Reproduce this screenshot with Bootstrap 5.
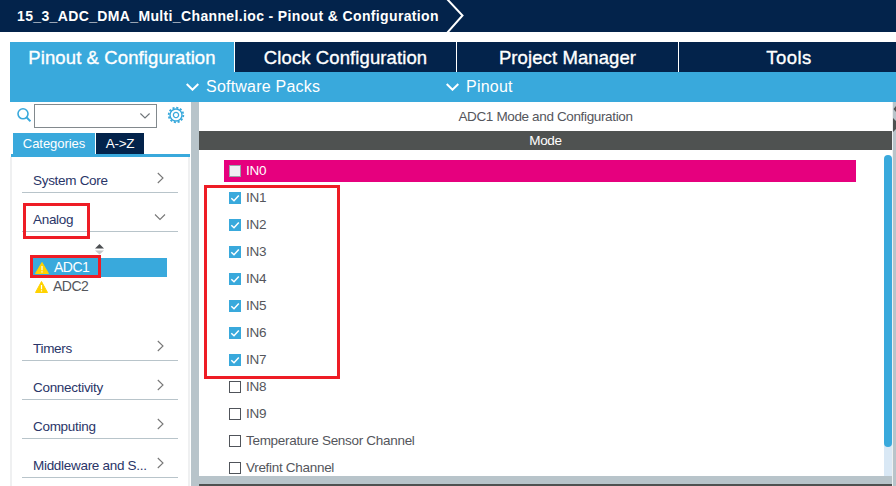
<!DOCTYPE html>
<html lang="en">
<head>
<meta charset="utf-8">
<meta name="viewport" content="width=device-width, initial-scale=1">
<title>Pinout &amp; Configuration</title>
<link href="https://cdn.jsdelivr.net/npm/bootstrap@5.3.0/dist/css/bootstrap.min.css" rel="stylesheet">
<style>
:root{--navy:#03234b;--sky:#39a9dc;--steel:#b8c4ca;--coal:#4f5251;--alert:#ee1c25}
body{width:896px;height:486px;overflow:hidden;background:#fff;font:13.5px/16px "Liberation Sans",Arial,sans-serif;letter-spacing:-.3px;color:#54565c}
svg{display:block;flex:none}
.crumb{height:32px;background:var(--navy);padding-left:17px}
.crumb-text{font-size:14px;font-weight:700;letter-spacing:.36px;width:423px}
.main-tabs{height:30px;margin:10px 0 0 10px;gap:1px}
.main-tabs .nav-link{width:221px;padding:0;background:var(--navy);color:#fff;border-radius:0;font-size:18.5px;letter-spacing:.1px;line-height:31px;text-align:center;-webkit-text-stroke:.35px #fff}
.main-tabs .nav-link.active{width:224px;background:var(--sky)}
.main-tabs .nav-link:last-child{width:217px;padding-left:3px;letter-spacing:.5px}
.sub-bar{height:30px;margin-left:10px;background:var(--sky);color:#fff;font-size:16px;letter-spacing:.22px}
.menu-a{margin-left:176px;width:260px;gap:7px}
.menu-b{gap:7px}
.work{height:384px;padding-left:10px}
.side{width:180px;flex:none}
.search-row{height:31px;padding:2px 0 0 7px}
.combo{width:123px;height:24px;border:1px solid #82898d;margin-left:3px;padding-right:6px}
.side-tabs{padding-left:3px;gap:1px;height:21px;color:#fff}
.side-tabs div{height:21px;line-height:21px;text-align:center}
.tab-cat{width:82px;background:var(--sky);font-size:13px;letter-spacing:-.05px}
.tab-az{width:48px;background:var(--navy)}
.side-body{height:332px;border-left:2px solid #eff0f1;border-right:2px solid #eff0f1;overflow:hidden;padding:0 10px}
.side-line{height:3px;background:var(--sky);margin-left:1px}
.group-row{height:39px;border-bottom:1px solid var(--steel);padding:14px 14px 0 11px;color:#2a3568}
.group-row.opened{padding-right:12px}
.group-row.first{height:36px;padding-top:11px}
.group-row .label{line-height:26px;height:26px}
.group-row.first .label{height:25px}
.group-row svg{margin-top:4px}
.open-list{height:90px;position:relative;padding:26px 1px 0 8px;margin-right:10px}
.periph{height:19px;padding-left:5px;gap:5px;font-size:14px;letter-spacing:-.5px}
.periph span{padding-bottom:1px}
.periph.on{background:var(--sky);color:#fff}
.sorter{position:absolute;left:73px;top:12px}
.splitter{width:8px;background:var(--steel);margin-left:1px;flex:none}
.pane{width:693px;flex:none}
.pane-title{height:29px;line-height:29px;text-align:center;letter-spacing:-.36px}
.mode-bar{height:19px;line-height:19px;background:var(--coal);color:#fff;text-align:center}
.pane-main{height:326px}
.checks{width:632px;margin:7px 0 0 25px}
.check-row{height:27px;padding-left:5px;gap:5px}
.check-row.hot{height:22px;margin:3px 0 2px;background:#e6007e;color:#fff}
.box{width:12px;height:12px;border:1px solid #50545a;background:#fff;flex:none}
.box.on{border:0;background:var(--sky)}
.check-row:not(.hot) .box{margin-top:1px}
.hot .box{background:#f0f0f3;border-color:#9aa3a8}
.track{width:8px;margin-top:5px;background:linear-gradient(#fff 50%,#d9e8f5 50%)}
.thumb{height:292px;background:var(--sky);border-radius:4px}
.pane-foot{height:8px;background:var(--steel)}
.next-bar{height:2px;background:var(--coal)}
.edge{width:4px;border-left:1px solid #eef0f1;background:var(--steel);flex:none}
.mark-frame{position:absolute;border:3px solid var(--alert);pointer-events:none}
.frame-analog{left:23px;top:203px;width:67px;height:36px}
.frame-adc{left:30px;top:255px;width:71px;height:23px}
.frame-inputs{left:204px;top:185px;width:136px;height:194px}
</style>
<script src="https://cdn.jsdelivr.net/npm/bootstrap@5.3.0/dist/js/bootstrap.bundle.min.js"></script>
</head>
<body class="position-relative">
<header class="crumb d-flex align-items-center text-white">
  <div class="crumb-text text-nowrap">15_3_ADC_DMA_Multi_Channel.ioc - Pinout &amp; Configuration</div>
  <svg width="26" height="32" fill="none" stroke="#fff" stroke-width="2"><path d="M7 -1L22.5 15.5L7 33"/></svg>
</header>
<nav class="main-tabs nav flex-nowrap">
  <a class="nav-link active">Pinout &amp; Configuration</a>
  <a class="nav-link">Clock Configuration</a>
  <a class="nav-link">Project Manager</a>
  <a class="nav-link">Tools</a>
</nav>
<div class="sub-bar d-flex align-items-center">
  <div class="menu-a d-flex align-items-center"><svg width="13" height="8" fill="none" stroke="#fff" stroke-width="2"><path d="M.7 1L6.5 6.7L12.3 1"/></svg><span>Software Packs</span></div>
  <div class="menu-b d-flex align-items-center"><svg width="13" height="8" fill="none" stroke="#fff" stroke-width="2"><path d="M.7 1L6.5 6.7L12.3 1"/></svg><span>Pinout</span></div>
</div>
<main class="work d-flex">
  <aside class="side">
    <div class="search-row d-flex align-items-start">
      <svg width="14" height="22" fill="none" stroke="#39a9dc" stroke-width="1.6"><circle cx="6" cy="9.8" r="5"/><path d="M9.7 13.5L13.5 17.3" stroke-width="2"/></svg>
      <div class="combo d-flex align-items-center justify-content-end"><svg width="10" height="6" fill="none" stroke="#6e7478" stroke-width="1.1"><path d="M.4 .5L5 5L9.6 .5"/></svg></div>
      <svg class="ms-auto me-1" width="19" height="22" viewBox="-9 -11 19 22" fill="none" stroke="#39a9dc"><circle r="6" stroke-width="1.4"/><circle r="7.3" stroke-width="1.8" stroke-dasharray="2.1 1.722"/><circle r="2.6" stroke-width="1.3"/></svg>
    </div>
    <div class="side-tabs d-flex"><div class="tab-cat">Categories</div><div class="tab-az">A-&gt;Z</div></div>
    <div class="side-line"></div>
    <div class="side-body">
      <div class="group-row first d-flex justify-content-between"><span class="label">System Core</span><svg width="7" height="12" fill="none" stroke="#777" stroke-width="1.1"><path d="M.8 1L6 6L.8 11"/></svg></div>
      <div class="group-row opened d-flex justify-content-between"><span class="label">Analog</span><svg width="12" height="12" fill="none" stroke="#777" stroke-width="1.1"><path d="M1 3.5L6 8.5L11 3.5"/></svg></div>
      <div class="open-list">
        <svg class="sorter" width="9" height="11"><path d="M0 4.5L4.5 0L9 4.5Z" fill="#4c4f52"/><path d="M0 6.5H9L4.5 10.5Z" fill="#c4c6c8"/></svg>
        <div class="periph on d-flex align-items-center"><svg width="14" height="12"><path d="M7 .5L13.5 11.5H.5Z" fill="#ffd200" stroke="#ffd200" stroke-linejoin="round"/><path d="M7 4V8.2M7 9.3V10.6" stroke="#fff" stroke-width="1.2"/></svg><span>ADC1</span></div>
        <div class="periph d-flex align-items-center"><svg width="13" height="12"><path d="M6.5 .5L12.5 11.5H.5Z" fill="#ffd200" stroke="#ffd200" stroke-linejoin="round"/><path d="M6.5 4V8.2M6.5 9.3V10.6" stroke="#fff" stroke-width="1.2"/></svg><span>ADC2</span></div>
      </div>
      <div class="group-row d-flex justify-content-between"><span class="label">Timers</span><svg width="7" height="12" fill="none" stroke="#777" stroke-width="1.1"><path d="M.8 1L6 6L.8 11"/></svg></div>
      <div class="group-row d-flex justify-content-between"><span class="label">Connectivity</span><svg width="7" height="12" fill="none" stroke="#777" stroke-width="1.1"><path d="M.8 1L6 6L.8 11"/></svg></div>
      <div class="group-row d-flex justify-content-between"><span class="label">Computing</span><svg width="7" height="12" fill="none" stroke="#777" stroke-width="1.1"><path d="M.8 1L6 6L.8 11"/></svg></div>
      <div class="group-row d-flex justify-content-between"><span class="label text-nowrap">Middleware and S...</span><svg width="7" height="12" fill="none" stroke="#777" stroke-width="1.1"><path d="M.8 1L6 6L.8 11"/></svg></div>
    </div>
  </aside>
  <div class="splitter"></div>
  <section class="pane">
    <div class="pane-title">ADC1 Mode and Configuration</div>
    <div class="mode-bar">Mode</div>
    <div class="pane-main d-flex justify-content-between">
      <div class="checks">
        <div class="check-row hot d-flex align-items-center"><span class="box"></span><span>IN0</span></div>
        <div class="check-row d-flex align-items-center"><span class="box on"><svg width="12" height="12" fill="none" stroke="#fff" stroke-width="1.5"><path d="M2.3 6.3L5 8.8L9.8 3.5"/></svg></span><span>IN1</span></div>
        <div class="check-row d-flex align-items-center"><span class="box on"><svg width="12" height="12" fill="none" stroke="#fff" stroke-width="1.5"><path d="M2.3 6.3L5 8.8L9.8 3.5"/></svg></span><span>IN2</span></div>
        <div class="check-row d-flex align-items-center"><span class="box on"><svg width="12" height="12" fill="none" stroke="#fff" stroke-width="1.5"><path d="M2.3 6.3L5 8.8L9.8 3.5"/></svg></span><span>IN3</span></div>
        <div class="check-row d-flex align-items-center"><span class="box on"><svg width="12" height="12" fill="none" stroke="#fff" stroke-width="1.5"><path d="M2.3 6.3L5 8.8L9.8 3.5"/></svg></span><span>IN4</span></div>
        <div class="check-row d-flex align-items-center"><span class="box on"><svg width="12" height="12" fill="none" stroke="#fff" stroke-width="1.5"><path d="M2.3 6.3L5 8.8L9.8 3.5"/></svg></span><span>IN5</span></div>
        <div class="check-row d-flex align-items-center"><span class="box on"><svg width="12" height="12" fill="none" stroke="#fff" stroke-width="1.5"><path d="M2.3 6.3L5 8.8L9.8 3.5"/></svg></span><span>IN6</span></div>
        <div class="check-row d-flex align-items-center"><span class="box on"><svg width="12" height="12" fill="none" stroke="#fff" stroke-width="1.5"><path d="M2.3 6.3L5 8.8L9.8 3.5"/></svg></span><span>IN7</span></div>
        <div class="check-row d-flex align-items-center"><span class="box"></span><span>IN8</span></div>
        <div class="check-row d-flex align-items-center"><span class="box"></span><span>IN9</span></div>
        <div class="check-row d-flex align-items-center"><span class="box"></span><span>Temperature Sensor Channel</span></div>
        <div class="check-row d-flex align-items-center"><span class="box"></span><span>Vrefint Channel</span></div>
      </div>
      <div class="track"><div class="thumb"></div></div>
    </div>
    <div class="pane-foot"></div>
    <div class="next-bar"></div>
  </section>
  <div class="edge"><svg width="3" height="32" fill="#4f5251"><path d="M3 4L.5 7L3 10ZM0 16L3 19V27L0 30Z"/></svg></div>
</main>
<div class="mark-frame frame-analog"></div>
<div class="mark-frame frame-adc"></div>
<div class="mark-frame frame-inputs"></div>
</body>
</html>
